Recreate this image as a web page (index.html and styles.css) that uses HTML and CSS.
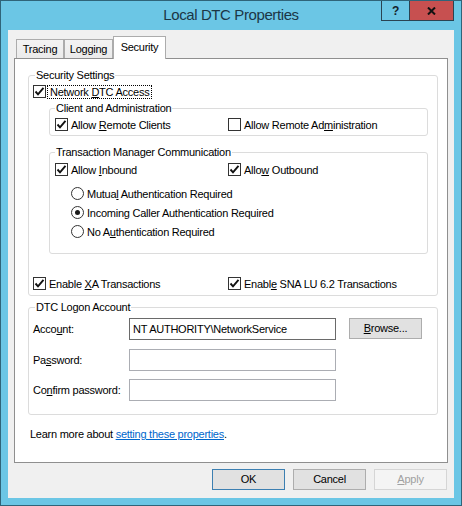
FILE: index.html
```html
<!DOCTYPE html>
<html lang="en">
<head>
    <meta charset="UTF-8">
    <title>Local DTC Properties</title>
    <link rel="stylesheet" href="styles.css">
</head>
<body>
    <div class="window">
        <div class="titlebar">
            <div class="title">Local DTC Properties</div>
            <div class="caption">
                <div class="cap-btn help">?</div>
                <div class="cap-btn close">
                    <svg width="9" height="8" viewBox="0 0 9 8"><path d="M1 0.5 L8 7.5 M8 0.5 L1 7.5" stroke="#111" stroke-width="2" fill="none"/></svg>
                </div>
            </div>
        </div>

        <div class="client">
            <div class="tabs">
                <div class="tab tab-tracing">Tracing</div>
                <div class="tab tab-logging">Logging</div>
                <div class="tab tab-security active">Security</div>
            </div>

            <div class="panel">
                <fieldset class="group security">
                    <legend>Security Settings</legend>
                    <label class="check">
                        <span class="box"><svg width="11" height="11" viewBox="0 0 11 11"><polyline points="1.5,5.5 4,8.3 9.5,1.8" stroke="#111" stroke-width="1.9" fill="none"/></svg></span>
                        <span class="focus">Network <u>D</u>TC Access</span>
                    </label>

                    <fieldset class="group inner client-admin">
                        <legend>Client and Administration</legend>
                        <div class="cols cols-inner">
                            <label class="check">
                                <span class="box"><svg width="11" height="11" viewBox="0 0 11 11"><polyline points="1.5,5.5 4,8.3 9.5,1.8" stroke="#111" stroke-width="1.9" fill="none"/></svg></span>
                                <span>Allow <u>R</u>emote Clients</span>
                            </label>
                            <label class="check">
                                <span class="box"></span>
                                <span>Allow Remote Ad<u>m</u>inistration</span>
                            </label>
                        </div>
                    </fieldset>

                    <fieldset class="group inner tmc">
                        <legend>Transaction Manager Communication</legend>
                        <div class="cols cols-inner">
                            <label class="check">
                                <span class="box"><svg width="11" height="11" viewBox="0 0 11 11"><polyline points="1.5,5.5 4,8.3 9.5,1.8" stroke="#111" stroke-width="1.9" fill="none"/></svg></span>
                                <span>Allow <u>I</u>nbound</span>
                            </label>
                            <label class="check">
                                <span class="box"><svg width="11" height="11" viewBox="0 0 11 11"><polyline points="1.5,5.5 4,8.3 9.5,1.8" stroke="#111" stroke-width="1.9" fill="none"/></svg></span>
                                <span>Allo<u>w</u> Outbound</span>
                            </label>
                        </div>
                        <div class="radios">
                            <label class="option"><span class="radio"></span><span>Mutua<u>l</u> Authentication Required</span></label>
                            <label class="option"><span class="radio on"></span><span>Incomin<u>g</u> Caller Authentication Required</span></label>
                            <label class="option"><span class="radio"></span><span>No A<u>u</u>thentication Required</span></label>
                        </div>
                    </fieldset>

                    <div class="cols cols-outer">
                        <label class="check">
                            <span class="box"><svg width="11" height="11" viewBox="0 0 11 11"><polyline points="1.5,5.5 4,8.3 9.5,1.8" stroke="#111" stroke-width="1.9" fill="none"/></svg></span>
                            <span>Enable <u>X</u>A Transactions</span>
                        </label>
                        <label class="check">
                            <span class="box"><svg width="11" height="11" viewBox="0 0 11 11"><polyline points="1.5,5.5 4,8.3 9.5,1.8" stroke="#111" stroke-width="1.9" fill="none"/></svg></span>
                            <span>Enabl<u>e</u> SNA LU 6.2 Transactions</span>
                        </label>
                    </div>
                </fieldset>

                <fieldset class="group logon">
                    <legend>DTC Logon Account</legend>
                    <div class="logon-grid">
                        <span>Acco<u>u</u>nt:</span>
                        <input class="field active-field" type="text" value="NT AUTHORITY\NetworkService" readonly>
                        <div class="btn browse"><u>B</u>rowse...</div>

                        <span>Pa<u>s</u>sword:</span>
                        <input class="field" type="password" readonly>
                        <span></span>

                        <span>Co<u>n</u>firm password:</span>
                        <input class="field" type="password" readonly>
                        <span></span>
                    </div>
                </fieldset>

                <p class="learn">Learn more about <a href="#">setting these properties</a>.</p>
            </div>

            <div class="buttons">
                <div class="btn default">OK</div>
                <div class="btn">Cancel</div>
                <div class="btn disabled"><u>A</u>pply</div>
            </div>
        </div>
    </div>
</body>
</html>
```

FILE: styles.css
```css
body {
    margin: 0;
    font-family: "Liberation Sans", Arial, sans-serif;
    font-size: 11px;
    letter-spacing: -0.25px;
    color: #000;
}

.window {
    width: 462px;
    height: 506px;
    box-sizing: border-box;
    border: 1px solid #2f6479;
    background-color: #6bc6e5;
    display: flex;
    flex-direction: column;
}

/* title bar */
.titlebar {
    height: 29px;
    flex: none;
    display: grid;
    grid-template-columns: 1fr auto 1fr;
    align-items: center;
}

.title {
    grid-column: 2;
    font-size: 15px;
    letter-spacing: -0.4px;
    color: #1c3645;
    margin-top: -2px;
}

.caption {
    grid-column: 3;
    justify-self: end;
    align-self: start;
    display: flex;
    margin-right: 7px;
}

.cap-btn {
    box-sizing: border-box;
    height: 20px;
    border: 1px solid #2a4352;
    border-top: none;
    display: flex;
    align-items: center;
    justify-content: center;
}

.help {
    width: 29px;
    font-weight: bold;
    font-size: 12px;
    color: #14232c;
}

.close {
    width: 44px;
    border-left: none;
    background-color: #c75050;
}

/* client area */
.client {
    flex: 1;
    margin: 0 7px 7px;
    background-color: #f0f0f0;
    padding: 6px 6px 8px;
    display: flex;
    flex-direction: column;
}

.tabs {
    display: flex;
    align-items: flex-end;
    height: 23px;
    margin-bottom: -1px;
    padding-left: 2px;
    position: relative;
    z-index: 1;
}

.tab {
    box-sizing: border-box;
    height: 19px;
    margin-bottom: 1px;
    border: 1px solid #acacac;
    border-bottom: none;
    background: linear-gradient(#f3f3f3, #ebebeb);
    text-align: center;
    line-height: 18px;
}

.tab-tracing { width: 48px; }
.tab-logging { width: 49px; }
.tab-security { width: 53px; }

.tab.active {
    height: 23px;
    margin-bottom: 0;
    background: #fff;
    line-height: 21px;
}

.panel {
    flex: 1;
    border: 1px solid #8f8f8f;
    background-color: #fff;
    padding: 9px 9px 0 13px;
}

/* group boxes */
.group {
    margin: 0;
    border: 1px solid #dcdcdc;
    border-radius: 3px;
    padding: 1px 9px 3px 4px;
}

.group legend {
    padding: 0 1px;
    margin-left: 2px;
    line-height: 14px;
}

.group.inner {
    margin-left: 16px;
    padding: 1px 6px 2px 5px;
}

.group.inner legend {
    margin-left: 0;
}

.client-admin {
    margin-top: 1px;
}

.tmc {
    margin-top: 9px;
    padding-bottom: 12px !important;
}

.tmc .cols {
    padding-top: 1px;
}

.cols {
    display: grid;
}

.cols-inner {
    grid-template-columns: 173px 1fr;
}

.cols-outer {
    grid-template-columns: 195px 1fr;
    margin-top: 21px;
}

.check, .option {
    display: flex;
    align-items: center;
    gap: 3px;
    height: 17px;
    white-space: nowrap;
}

.box {
    width: 13px;
    height: 13px;
    box-sizing: border-box;
    border: 1px solid #333;
    background-color: #fff;
    display: flex;
    flex: none;
}

.focus {
    border: 1px dotted #000;
    padding: 0 2px 0 2px;
    margin-left: -2px;
    line-height: 12px;
}

.radios {
    margin: 6px 0 0 16px;
}

.option {
    height: 19px;
}

.radio {
    width: 13px;
    height: 13px;
    box-sizing: border-box;
    border: 1px solid #333;
    border-radius: 50%;
    background-color: #fff;
    display: flex;
    align-items: center;
    justify-content: center;
    flex: none;
}

.radio.on::after {
    content: '';
    width: 5px;
    height: 5px;
    border-radius: 50%;
    background-color: #1a1a1a;
}

/* logon account */
.logon {
    margin-top: 4px;
    padding: 4px 9px 13px 4px;
}

.logon-grid {
    display: grid;
    grid-template-columns: 96px 207px 86px;
    grid-auto-rows: 22px;
    row-gap: 8.5px;
    align-items: center;
}

.field {
    box-sizing: border-box;
    width: 207px;
    height: 22px;
    margin: 0;
    border: 1px solid #abadb3;
    background-color: #fff;
    padding: 0 3px;
    font: inherit;
    letter-spacing: -0.25px;
    color: #000;
    outline: none;
}

.active-field {
    border-color: #6a6a6a;
}

.btn {
    box-sizing: border-box;
    width: 73px;
    height: 21px;
    border: 1px solid #adadad;
    background-color: #e1e1e1;
    text-align: center;
    line-height: 19px;
}

.browse {
    margin-left: 13px;
    align-self: start;
}

.learn {
    margin: 12px 0 0 2px;
    line-height: 14px;
}

.learn a {
    color: #0066cc;
}

.buttons {
    display: flex;
    justify-content: flex-end;
    gap: 8px;
    margin-top: 6px;
    padding-right: 1px;
}

.btn.default {
    border-color: #3c7fb1;
}

.btn.disabled {
    background-color: #f4f4f4;
    border-color: #d5d5d5;
    color: #a0a0a0;
}
```
